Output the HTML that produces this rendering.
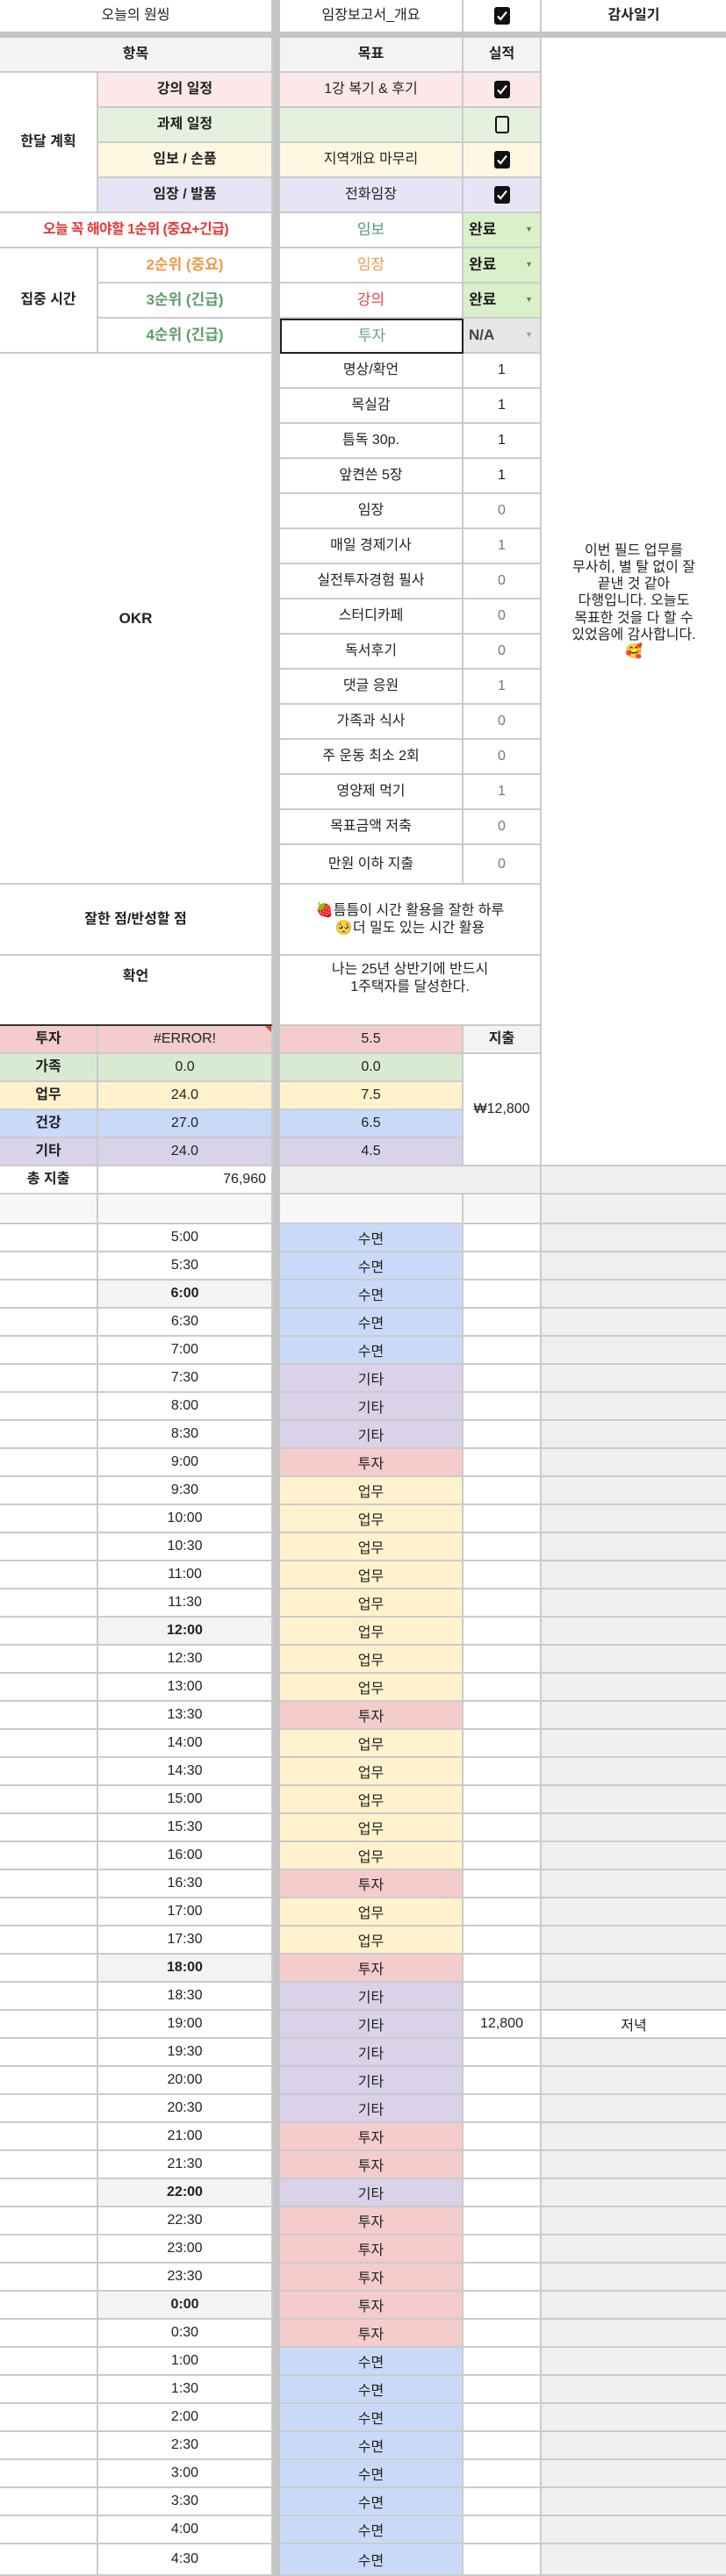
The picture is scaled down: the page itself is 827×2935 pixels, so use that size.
<!DOCTYPE html>
<html><head><meta charset="utf-8">
<style>
*{margin:0;padding:0;box-sizing:border-box}
body{width:827px;height:2935px;position:relative;background:#fff;font-family:"Liberation Sans","Noto Sans CJK KR",sans-serif;font-size:16px;color:#222;overflow:hidden}
.c{position:absolute;display:flex;align-items:center;justify-content:center;text-align:center;border-right:2px solid #cbcbcb;border-bottom:2px solid #cbcbcb;line-height:1.25}
.b{font-weight:bold}
.g{background:#f3f3f3}
.gap{position:absolute;left:311px;width:8px;top:0;height:2935px;background:#c4c4c4}
.chk{width:18px;height:20px;background:#111;border-radius:3px;display:flex;align-items:center;justify-content:center}
.dd{justify-content:space-between;padding:0 8px 0 6px;font-weight:bold;font-size:17px}
.dd i{font-style:normal;font-size:9px;color:#5a8a3a}
.tr{position:absolute;left:0;width:827px;height:32px;display:flex}
.tr div{height:32px;display:flex;align-items:center;justify-content:center;border-right:2px solid #cbcbcb;border-bottom:2px solid #cbcbcb;font-size:16px}
.tr .a{width:112px}.tr .t{width:199px}.tr .s{width:8px;background:#c4c4c4;border:none}.tr .k{width:209px}.tr .d{width:89px}.tr .e{width:210px;background:#efefef;border-right:none}
.S{background:#c9daf8!important}.K{background:#d9d2e9!important}.T{background:#f4cccc!important}.U{background:#fff2cc!important}.F{background:#d9ead3!important}
.bt{background:#f3f3f3;font-weight:bold}
</style></head><body>
<div class="gap"></div>
<div class="c" style="left:0;top:0;width:311px;height:36px;border-bottom:none">오늘의 원씽</div>
<div class="c" style="left:319px;top:0;width:209px;height:36px;border-bottom:none">임장보고서_개요</div>
<div class="c" style="left:528px;top:0;width:89px;height:36px;border-bottom:none"><div class="chk"><svg width="14" height="14" viewBox="0 0 14 14"><path d="M2 7.5l3.2 3.5L12 2.5" stroke="#fff" stroke-width="2.2" fill="none"/></svg></div></div>
<div class="c b" style="left:617px;top:0;width:210px;height:36px;border-right:none;border-bottom:none">감사일기</div>
<div style="position:absolute;left:0;top:36px;width:827px;height:7px;background:#c4c4c4"></div>
<div class="c b g" style="left:0;top:43px;width:311px;height:40px">항목</div>
<div class="c b g" style="left:319px;top:43px;width:209px;height:40px">목표</div>
<div class="c b g" style="left:528px;top:43px;width:89px;height:40px">실적</div>
<div class="c" style="left:617px;top:43px;width:210px;height:1286px;border-right:none;font-size:16px;line-height:1.2;padding:0 2px">이번 필드 업무를<br>무사히, 별 탈 없이 잘<br>끝낸 것 같아<br>다행입니다. 오늘도<br>목표한 것을 다 할 수<br>있었음에 감사합니다.<br>🥰</div>
<div class="c b" style="left:0;top:83px;width:112px;height:160px">한달 계획</div>
<div class="c b" style="left:112px;top:83px;width:199px;height:40px;background:#fce8e8">강의 일정</div>
<div class="c b" style="left:112px;top:123px;width:199px;height:40px;background:#e6f0df">과제 일정</div>
<div class="c b" style="left:112px;top:163px;width:199px;height:40px;background:#fef8e2">임보 / 손품</div>
<div class="c b" style="left:112px;top:203px;width:199px;height:40px;background:#e8e4f5">임장 / 발품</div>
<div class="c" style="left:319px;top:83px;width:209px;height:40px;background:#fce8e8">1강 복기 &amp; 후기</div>
<div class="c" style="left:319px;top:123px;width:209px;height:40px;background:#e6f0df"></div>
<div class="c" style="left:319px;top:163px;width:209px;height:40px;background:#fef8e2">지역개요 마무리</div>
<div class="c" style="left:319px;top:203px;width:209px;height:40px;background:#e8e4f5">전화임장</div>
<div class="c" style="left:528px;top:83px;width:89px;height:40px;background:#fce8e8"><div class="chk"><svg width="14" height="14" viewBox="0 0 14 14"><path d="M2 7.5l3.2 3.5L12 2.5" stroke="#fff" stroke-width="2.2" fill="none"/></svg></div></div>
<div class="c" style="left:528px;top:123px;width:89px;height:40px;background:#e6f0df"><div style="width:16px;height:20px;border:2.5px solid #111;border-radius:3px"></div></div>
<div class="c" style="left:528px;top:163px;width:89px;height:40px;background:#fef8e2"><div class="chk"><svg width="14" height="14" viewBox="0 0 14 14"><path d="M2 7.5l3.2 3.5L12 2.5" stroke="#fff" stroke-width="2.2" fill="none"/></svg></div></div>
<div class="c" style="left:528px;top:203px;width:89px;height:40px;background:#e8e4f5"><div class="chk"><svg width="14" height="14" viewBox="0 0 14 14"><path d="M2 7.5l3.2 3.5L12 2.5" stroke="#fff" stroke-width="2.2" fill="none"/></svg></div></div>
<div class="c b" style="left:0;top:243px;width:311px;height:40px;color:#e53935;font-size:16px;letter-spacing:-0.6px;white-space:nowrap">오늘 꼭 해야할 1순위 (중요+긴급)</div>
<div class="c b" style="left:0;top:283px;width:112px;height:120px">집중 시간</div>
<div class="c b" style="left:112px;top:283px;width:199px;height:40px;color:#f39a45;font-size:17px">2순위 (중요)</div>
<div class="c b" style="left:112px;top:323px;width:199px;height:40px;color:#5d9c6a;font-size:17px">3순위 (긴급)</div>
<div class="c b" style="left:112px;top:363px;width:199px;height:40px;color:#5d9c6a;font-size:17px">4순위 (긴급)</div>
<div class="c" style="left:319px;top:243px;width:209px;height:40px;color:#4f9d7a;font-size:17px">임보</div>
<div class="c" style="left:319px;top:283px;width:209px;height:40px;color:#f39a45;font-size:17px">임장</div>
<div class="c" style="left:319px;top:323px;width:209px;height:40px;color:#e04848;font-size:17px">강의</div>
<div class="c" style="left:319px;top:363px;width:209px;height:40px;color:#6a9f80;font-size:17px;border:2px solid #222">투자</div>
<div class="c dd" style="left:528px;top:243px;width:89px;height:40px;background:#d9f0c8">완료<i>▼</i></div>
<div class="c dd" style="left:528px;top:283px;width:89px;height:40px;background:#d9f0c8">완료<i>▼</i></div>
<div class="c dd" style="left:528px;top:323px;width:89px;height:40px;background:#d9f0c8">완료<i>▼</i></div>
<div class="c dd" style="left:528px;top:363px;width:89px;height:40px;background:#e6e6e6;color:#444">N/A<i style="color:#999">▼</i></div>
<div class="c b" style="left:0;top:403px;width:311px;height:605px;font-size:17px">OKR</div>
<div class="c" style="left:319px;top:403px;width:209px;height:40px">명상/확언</div><div class="c" style="left:528px;top:403px;width:89px;height:40px">1</div>
<div class="c" style="left:319px;top:443px;width:209px;height:40px">목실감</div><div class="c" style="left:528px;top:443px;width:89px;height:40px">1</div>
<div class="c" style="left:319px;top:483px;width:209px;height:40px">틈독 30p.</div><div class="c" style="left:528px;top:483px;width:89px;height:40px">1</div>
<div class="c" style="left:319px;top:523px;width:209px;height:40px">앞켠쓴 5장</div><div class="c" style="left:528px;top:523px;width:89px;height:40px">1</div>
<div class="c" style="left:319px;top:563px;width:209px;height:40px">임장</div><div class="c" style="left:528px;top:563px;width:89px;height:40px;color:#777">0</div>
<div class="c" style="left:319px;top:603px;width:209px;height:40px">매일 경제기사</div><div class="c" style="left:528px;top:603px;width:89px;height:40px;color:#777">1</div>
<div class="c" style="left:319px;top:643px;width:209px;height:40px">실전투자경험 필사</div><div class="c" style="left:528px;top:643px;width:89px;height:40px;color:#777">0</div>
<div class="c" style="left:319px;top:683px;width:209px;height:40px">스터디카페</div><div class="c" style="left:528px;top:683px;width:89px;height:40px;color:#777">0</div>
<div class="c" style="left:319px;top:723px;width:209px;height:40px">독서후기</div><div class="c" style="left:528px;top:723px;width:89px;height:40px;color:#777">0</div>
<div class="c" style="left:319px;top:763px;width:209px;height:40px">댓글 응원</div><div class="c" style="left:528px;top:763px;width:89px;height:40px;color:#777">1</div>
<div class="c" style="left:319px;top:803px;width:209px;height:40px">가족과 식사</div><div class="c" style="left:528px;top:803px;width:89px;height:40px;color:#777">0</div>
<div class="c" style="left:319px;top:843px;width:209px;height:40px">주 운동 최소 2회</div><div class="c" style="left:528px;top:843px;width:89px;height:40px;color:#777">0</div>
<div class="c" style="left:319px;top:883px;width:209px;height:40px">영양제 먹기</div><div class="c" style="left:528px;top:883px;width:89px;height:40px;color:#777">1</div>
<div class="c" style="left:319px;top:923px;width:209px;height:40px">목표금액 저축</div><div class="c" style="left:528px;top:923px;width:89px;height:40px;color:#777">0</div>
<div class="c" style="left:319px;top:963px;width:209px;height:45px">만원 이하 지출</div><div class="c" style="left:528px;top:963px;width:89px;height:45px;color:#777">0</div>
<div class="c b" style="left:0;top:1008px;width:311px;height:81px">잘한 점/반성할 점</div>
<div class="c" style="left:319px;top:1008px;width:298px;height:81px;font-size:16px">🍓틈틈이 시간 활용을 잘한 하루<br>🥺더 밀도 있는 시간 활용</div>
<div class="c b" style="left:0;top:1089px;width:311px;height:80px;border-bottom:2px solid #333;align-items:flex-start;padding-top:14px">확언</div>
<div class="c" style="left:319px;top:1089px;width:298px;height:80px;align-items:flex-start;padding-top:6px">나는 25년 상반기에 반드시<br>1주택자를 달성한다.</div>
<div class="c b T" style="left:0;top:1169px;width:112px;height:32px">투자</div>
<div class="c T" style="left:112px;top:1169px;width:199px;height:32px">#ERROR!<span style="position:absolute;right:0;top:0;border-left:7px solid transparent;border-top:7px solid #e53935"></span></div>
<div class="c T" style="left:319px;top:1169px;width:209px;height:32px">5.5</div>
<div class="c b g" style="left:528px;top:1169px;width:89px;height:32px">지출</div>
<div class="c b F" style="left:0;top:1201px;width:112px;height:32px">가족</div>
<div class="c F" style="left:112px;top:1201px;width:199px;height:32px">0.0</div>
<div class="c F" style="left:319px;top:1201px;width:209px;height:32px">0.0</div>
<div class="c b U" style="left:0;top:1233px;width:112px;height:32px">업무</div>
<div class="c U" style="left:112px;top:1233px;width:199px;height:32px">24.0</div>
<div class="c U" style="left:319px;top:1233px;width:209px;height:32px">7.5</div>
<div class="c b S" style="left:0;top:1265px;width:112px;height:32px">건강</div>
<div class="c S" style="left:112px;top:1265px;width:199px;height:32px">27.0</div>
<div class="c S" style="left:319px;top:1265px;width:209px;height:32px">6.5</div>
<div class="c b K" style="left:0;top:1297px;width:112px;height:32px">기타</div>
<div class="c K" style="left:112px;top:1297px;width:199px;height:32px">24.0</div>
<div class="c K" style="left:319px;top:1297px;width:209px;height:32px">4.5</div>
<div class="c" style="left:528px;top:1201px;width:89px;height:128px">₩12,800</div>
<div class="c b" style="left:0;top:1329px;width:112px;height:32px">총 지출</div>
<div class="c" style="left:112px;top:1329px;width:199px;height:32px;justify-content:flex-end;padding-right:6px">76,960</div>
<div class="c" style="left:319px;top:1329px;width:298px;height:32px;background:#efefef"></div>
<div class="c" style="left:617px;top:1329px;width:210px;height:32px;background:#efefef;border-right:none"></div>
<div class="tr" style="top:1361px;height:34px"><div class="a" style="height:34px;background:#f7f7f7"></div><div class="t" style="height:34px;background:#f7f7f7"></div><div class="s" style="height:34px"></div><div class="k" style="height:34px;background:#f7f7f7"></div><div class="d" style="height:34px;background:#f7f7f7"></div><div class="e" style="height:34px"></div></div>
<div class="tr" style="top:1395px"><div class="a"></div><div class="t">5:00</div><div class="s"></div><div class="k S">수면</div><div class="d"></div><div class="e"></div></div>
<div class="tr" style="top:1427px"><div class="a"></div><div class="t">5:30</div><div class="s"></div><div class="k S">수면</div><div class="d"></div><div class="e"></div></div>
<div class="tr" style="top:1459px"><div class="a"></div><div class="t bt">6:00</div><div class="s"></div><div class="k S">수면</div><div class="d"></div><div class="e"></div></div>
<div class="tr" style="top:1491px"><div class="a"></div><div class="t">6:30</div><div class="s"></div><div class="k S">수면</div><div class="d"></div><div class="e"></div></div>
<div class="tr" style="top:1523px"><div class="a"></div><div class="t">7:00</div><div class="s"></div><div class="k S">수면</div><div class="d"></div><div class="e"></div></div>
<div class="tr" style="top:1555px"><div class="a"></div><div class="t">7:30</div><div class="s"></div><div class="k K">기타</div><div class="d"></div><div class="e"></div></div>
<div class="tr" style="top:1587px"><div class="a"></div><div class="t">8:00</div><div class="s"></div><div class="k K">기타</div><div class="d"></div><div class="e"></div></div>
<div class="tr" style="top:1619px"><div class="a"></div><div class="t">8:30</div><div class="s"></div><div class="k K">기타</div><div class="d"></div><div class="e"></div></div>
<div class="tr" style="top:1651px"><div class="a"></div><div class="t">9:00</div><div class="s"></div><div class="k T">투자</div><div class="d"></div><div class="e"></div></div>
<div class="tr" style="top:1683px"><div class="a"></div><div class="t">9:30</div><div class="s"></div><div class="k U">업무</div><div class="d"></div><div class="e"></div></div>
<div class="tr" style="top:1715px"><div class="a"></div><div class="t">10:00</div><div class="s"></div><div class="k U">업무</div><div class="d"></div><div class="e"></div></div>
<div class="tr" style="top:1747px"><div class="a"></div><div class="t">10:30</div><div class="s"></div><div class="k U">업무</div><div class="d"></div><div class="e"></div></div>
<div class="tr" style="top:1779px"><div class="a"></div><div class="t">11:00</div><div class="s"></div><div class="k U">업무</div><div class="d"></div><div class="e"></div></div>
<div class="tr" style="top:1811px"><div class="a"></div><div class="t">11:30</div><div class="s"></div><div class="k U">업무</div><div class="d"></div><div class="e"></div></div>
<div class="tr" style="top:1843px"><div class="a"></div><div class="t bt">12:00</div><div class="s"></div><div class="k U">업무</div><div class="d"></div><div class="e"></div></div>
<div class="tr" style="top:1875px"><div class="a"></div><div class="t">12:30</div><div class="s"></div><div class="k U">업무</div><div class="d"></div><div class="e"></div></div>
<div class="tr" style="top:1907px"><div class="a"></div><div class="t">13:00</div><div class="s"></div><div class="k U">업무</div><div class="d"></div><div class="e"></div></div>
<div class="tr" style="top:1939px"><div class="a"></div><div class="t">13:30</div><div class="s"></div><div class="k T">투자</div><div class="d"></div><div class="e"></div></div>
<div class="tr" style="top:1971px"><div class="a"></div><div class="t">14:00</div><div class="s"></div><div class="k U">업무</div><div class="d"></div><div class="e"></div></div>
<div class="tr" style="top:2003px"><div class="a"></div><div class="t">14:30</div><div class="s"></div><div class="k U">업무</div><div class="d"></div><div class="e"></div></div>
<div class="tr" style="top:2035px"><div class="a"></div><div class="t">15:00</div><div class="s"></div><div class="k U">업무</div><div class="d"></div><div class="e"></div></div>
<div class="tr" style="top:2067px"><div class="a"></div><div class="t">15:30</div><div class="s"></div><div class="k U">업무</div><div class="d"></div><div class="e"></div></div>
<div class="tr" style="top:2099px"><div class="a"></div><div class="t">16:00</div><div class="s"></div><div class="k U">업무</div><div class="d"></div><div class="e"></div></div>
<div class="tr" style="top:2131px"><div class="a"></div><div class="t">16:30</div><div class="s"></div><div class="k T">투자</div><div class="d"></div><div class="e"></div></div>
<div class="tr" style="top:2163px"><div class="a"></div><div class="t">17:00</div><div class="s"></div><div class="k U">업무</div><div class="d"></div><div class="e"></div></div>
<div class="tr" style="top:2195px"><div class="a"></div><div class="t">17:30</div><div class="s"></div><div class="k U">업무</div><div class="d"></div><div class="e"></div></div>
<div class="tr" style="top:2227px"><div class="a"></div><div class="t bt">18:00</div><div class="s"></div><div class="k T">투자</div><div class="d"></div><div class="e"></div></div>
<div class="tr" style="top:2259px"><div class="a"></div><div class="t">18:30</div><div class="s"></div><div class="k K">기타</div><div class="d"></div><div class="e"></div></div>
<div class="tr" style="top:2291px"><div class="a"></div><div class="t">19:00</div><div class="s"></div><div class="k K">기타</div><div class="d">12,800</div><div class="e" style="background:#fff">저녁</div></div>
<div class="tr" style="top:2323px"><div class="a"></div><div class="t">19:30</div><div class="s"></div><div class="k K">기타</div><div class="d"></div><div class="e"></div></div>
<div class="tr" style="top:2355px"><div class="a"></div><div class="t">20:00</div><div class="s"></div><div class="k K">기타</div><div class="d"></div><div class="e"></div></div>
<div class="tr" style="top:2387px"><div class="a"></div><div class="t">20:30</div><div class="s"></div><div class="k K">기타</div><div class="d"></div><div class="e"></div></div>
<div class="tr" style="top:2419px"><div class="a"></div><div class="t">21:00</div><div class="s"></div><div class="k T">투자</div><div class="d"></div><div class="e"></div></div>
<div class="tr" style="top:2451px"><div class="a"></div><div class="t">21:30</div><div class="s"></div><div class="k T">투자</div><div class="d"></div><div class="e"></div></div>
<div class="tr" style="top:2483px"><div class="a"></div><div class="t bt">22:00</div><div class="s"></div><div class="k K">기타</div><div class="d"></div><div class="e"></div></div>
<div class="tr" style="top:2515px"><div class="a"></div><div class="t">22:30</div><div class="s"></div><div class="k T">투자</div><div class="d"></div><div class="e"></div></div>
<div class="tr" style="top:2547px"><div class="a"></div><div class="t">23:00</div><div class="s"></div><div class="k T">투자</div><div class="d"></div><div class="e"></div></div>
<div class="tr" style="top:2579px"><div class="a"></div><div class="t">23:30</div><div class="s"></div><div class="k T">투자</div><div class="d"></div><div class="e"></div></div>
<div class="tr" style="top:2611px"><div class="a"></div><div class="t bt">0:00</div><div class="s"></div><div class="k T">투자</div><div class="d"></div><div class="e"></div></div>
<div class="tr" style="top:2643px"><div class="a"></div><div class="t">0:30</div><div class="s"></div><div class="k T">투자</div><div class="d"></div><div class="e"></div></div>
<div class="tr" style="top:2675px"><div class="a"></div><div class="t">1:00</div><div class="s"></div><div class="k S">수면</div><div class="d"></div><div class="e"></div></div>
<div class="tr" style="top:2707px"><div class="a"></div><div class="t">1:30</div><div class="s"></div><div class="k S">수면</div><div class="d"></div><div class="e"></div></div>
<div class="tr" style="top:2739px"><div class="a"></div><div class="t">2:00</div><div class="s"></div><div class="k S">수면</div><div class="d"></div><div class="e"></div></div>
<div class="tr" style="top:2771px"><div class="a"></div><div class="t">2:30</div><div class="s"></div><div class="k S">수면</div><div class="d"></div><div class="e"></div></div>
<div class="tr" style="top:2803px"><div class="a"></div><div class="t">3:00</div><div class="s"></div><div class="k S">수면</div><div class="d"></div><div class="e"></div></div>
<div class="tr" style="top:2835px"><div class="a"></div><div class="t">3:30</div><div class="s"></div><div class="k S">수면</div><div class="d"></div><div class="e"></div></div>
<div class="tr" style="top:2867px"><div class="a"></div><div class="t">4:00</div><div class="s"></div><div class="k S">수면</div><div class="d"></div><div class="e"></div></div>
<div class="tr" style="top:2899px;height:36px"><div class="a" style="height:36px"></div><div class="t" style="height:36px">4:30</div><div class="s" style="height:36px"></div><div class="k S" style="height:36px">수면</div><div class="d" style="height:36px"></div><div class="e" style="height:36px"></div></div>
</body></html>
